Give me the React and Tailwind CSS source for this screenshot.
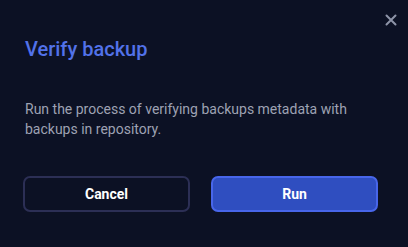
import React from 'react';

function App() {
  return (
    <div className="relative w-full h-[247px] overflow-hidden bg-[#0c1124] font-['Roboto','Liberation_Sans',sans-serif]">
      {/* close */}
      <button className="absolute right-[11px] top-[14px] w-[12px] h-[12px] flex items-center justify-center text-[#8e94a8]">
        <svg width="12" height="12" viewBox="0 0 12 12" fill="none" stroke="currentColor" strokeWidth="2" strokeLinecap="round">
          <path d="M1.5 1.5l9 9M10.5 1.5l-9 9" />
        </svg>
      </button>

      <div className="pt-[35px] px-[25px]">
        <h2 className="text-[20px] leading-[28px] font-medium text-[#5272e9]">Verify backup</h2>
        <p className="mt-[36px] text-[14px] leading-[20px] text-[#9ea2b3] w-[340px]">
          Run the process of verifying backups metadata with backups in repository.
        </p>
      </div>

      <div className="flex gap-[21px] px-[23px] mt-[37px]">
        <button className="w-[167px] h-[36px] rounded-[7px] border-2 border-[#2c2f55] text-white text-[14px] font-bold">
          Cancel
        </button>
        <button className="w-[167px] h-[36px] rounded-[7px] border-2 border-[#4866ea] bg-[#2f4ec0] text-white text-[14px] font-bold">
          Run
        </button>
      </div>
    </div>
  );
}

export default App;
